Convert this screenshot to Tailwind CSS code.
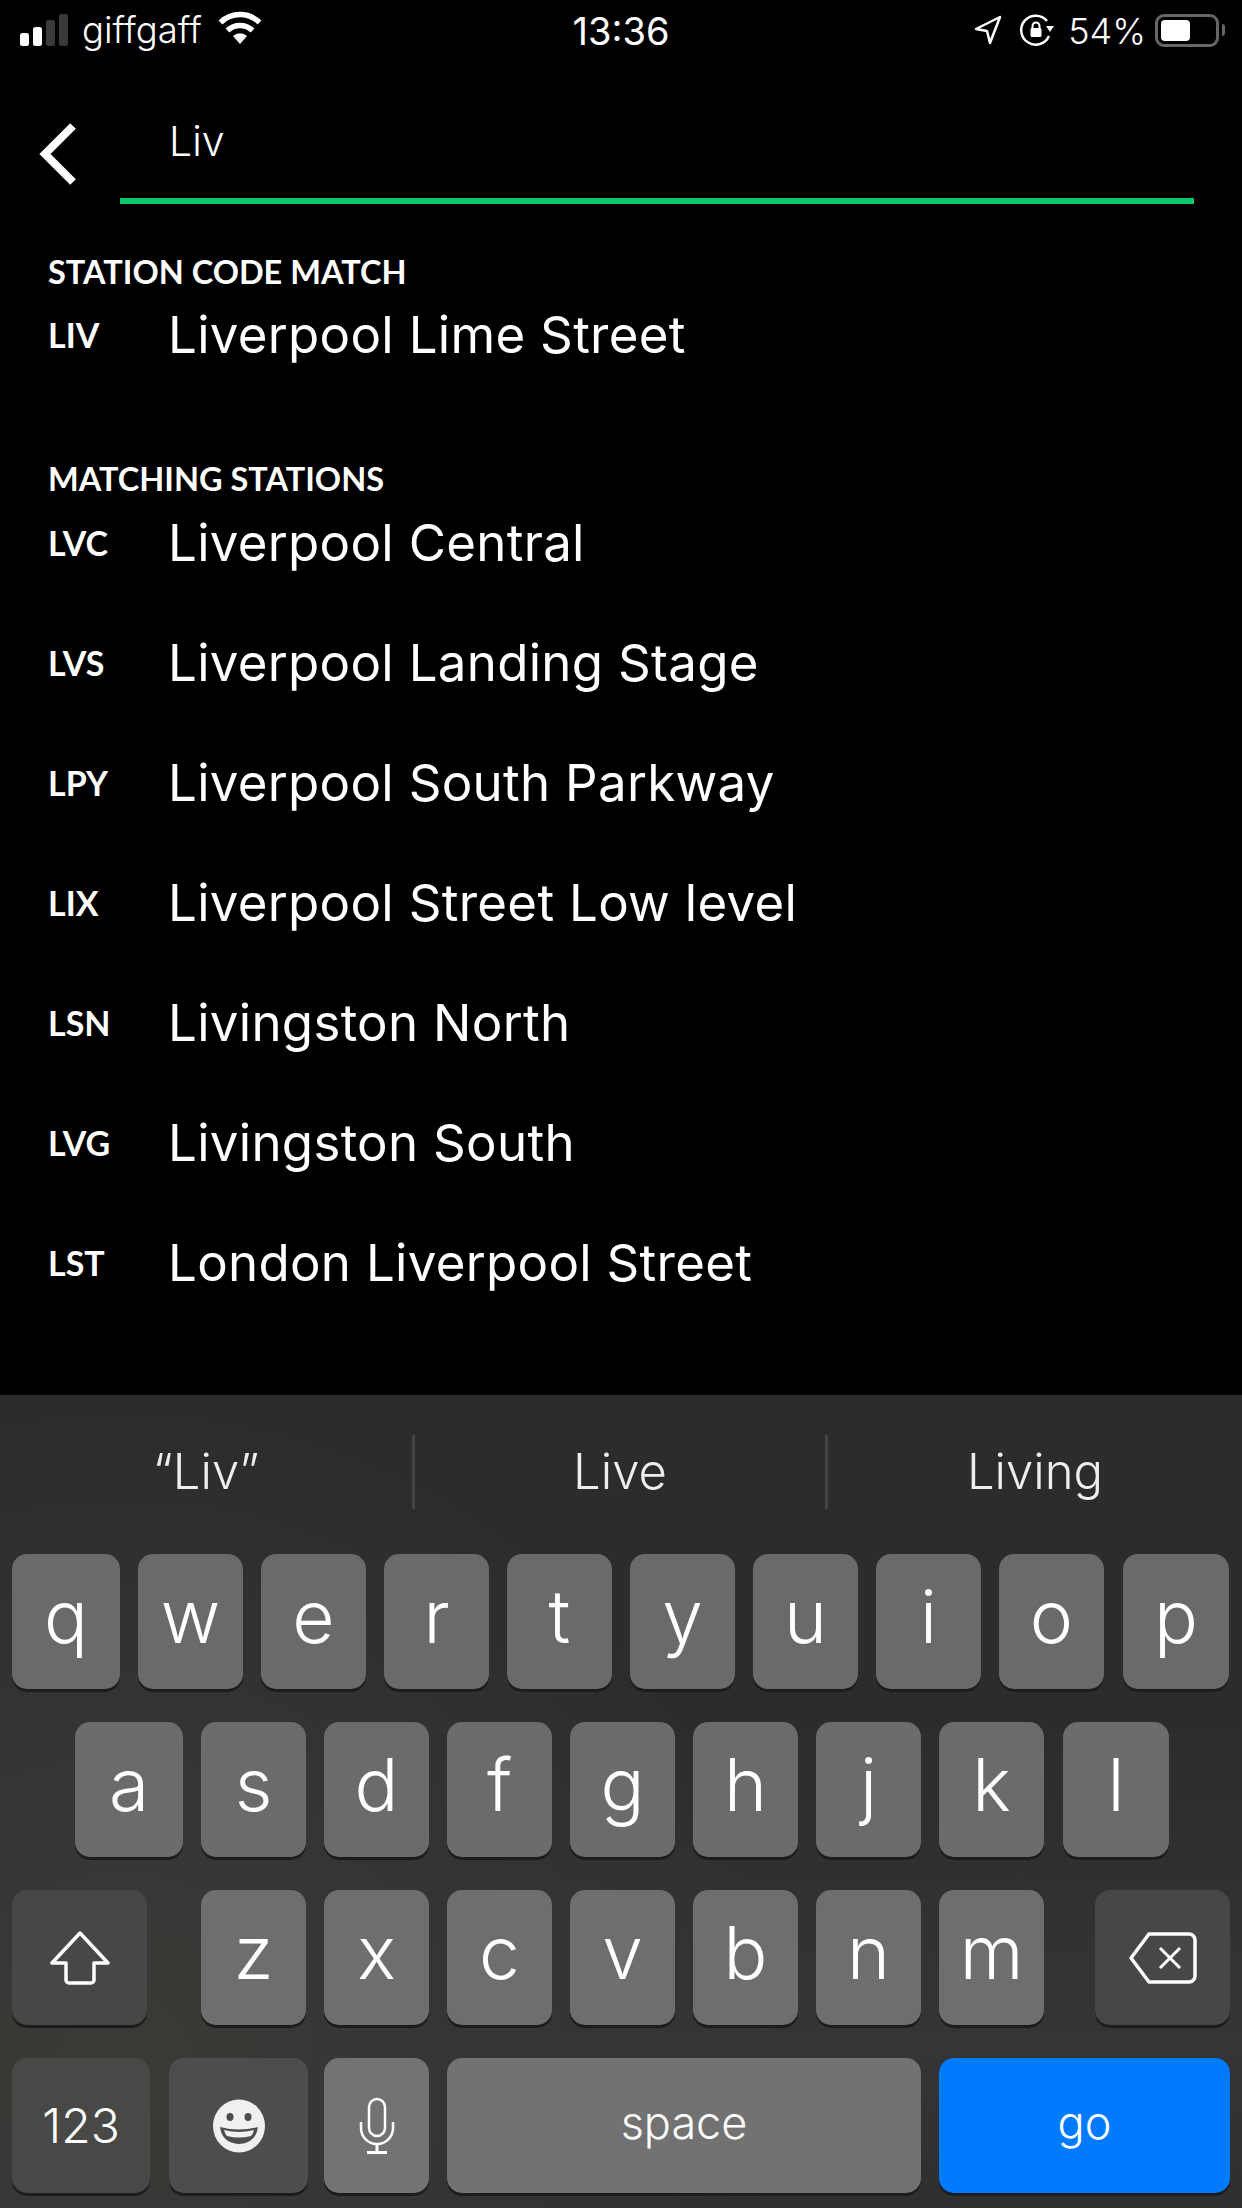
<!DOCTYPE html>
<html><head><meta charset="utf-8"><script src="https://cdn.jsdelivr.net/npm/@tailwindcss/browser@4"></script></head>
<body class="m-0 bg-black">
<div class="w-[1242px] h-[2208px] bg-black text-white flex flex-col overflow-hidden font-['Inter',sans-serif]">
  <!-- status bar -->
  <div class="relative h-[60px] shrink-0 flex items-center pl-[20px] pr-[17px]">
    <div class="flex items-end gap-[4px] h-[33px] mt-[-1px]">
      <div class="w-[9px] h-[13px] rounded-[2.5px] bg-white"></div>
      <div class="w-[9px] h-[19px] rounded-[2.5px] bg-white"></div>
      <div class="w-[9px] h-[26px] rounded-[2.5px] bg-[#3a3a3a]"></div>
      <div class="w-[9px] h-[32px] rounded-[2.5px] bg-[#3a3a3a]"></div>
    </div>
    <span class="ml-[14px] text-[36.5px] leading-[40px] font-light">giffgaff</span>
    <svg class="ml-[15px] mt-[-4px]" width="46" height="34" viewBox="0 0 46 34" fill="none"><path d="M23 33 16 25a10 10 0 0 1 14 0Z" fill="#fff"/><path d="M10.500 19.500a18 18 0 0 1 25 0" stroke="#fff" stroke-width="5.500"/><path d="M3.500 11.500a28 28 0 0 1 39 0" stroke="#fff" stroke-width="5.500"/></svg>
    <span class="absolute left-0 right-0 top-[11px] text-center text-[38px] leading-[40px]">13:36</span>
    <div class="ml-auto flex items-center">
      <svg width="28" height="30" viewBox="0 0 28 30" fill="none"><path d="M26 2 2 14l11 2 3 12Z" stroke="#fff" stroke-width="2.500" stroke-linejoin="round"/></svg>
      <svg class="ml-[18px]" width="34" height="34" viewBox="0 0 34 34" fill="none"><path d="M27 8A14.500 14.500 0 1 0 29 23" stroke="#fff" stroke-width="2.500"/><path d="M26 13h8l-4 6Z" fill="#fff"/><path d="M12.500 16v-3a3.500 3.500 0 0 1 7 0v3" stroke="#fff" stroke-width="2"/><rect x="10.500" y="15" width="11" height="9" rx="1.500" fill="#fff"/></svg>
      <span class="ml-[14px] mt-[2px] text-[36px] leading-[40px] font-light">54%</span>
      <div class="ml-[9px] w-[64px] h-[33px] rounded-[9px] border-[3px] border-[#666] p-[3px]"><div class="w-[29px] h-full rounded-[4px] bg-white"></div></div>
      <div class="ml-[3px] w-[3px] h-[12px] rounded-r-[3px] bg-[#666]"></div>
    </div>
  </div>
  <!-- search -->
  <div class="h-[144px] shrink-0 flex">
    <div class="w-[120px] shrink-0 pl-[38px] pt-[63px]">
      <svg width="40" height="62" viewBox="0 0 40 62" fill="none"><path d="M35 3 7 31l28 28" stroke="#fff" stroke-width="8"/></svg>
    </div>
    <div class="w-[1074px] h-[144px] border-b-[6px] border-[#0cc76a] pl-[49px] pt-[56px]">
      <span class="block text-[41px] leading-[50px] font-light">Liv</span>
    </div>
  </div>
  <!-- list -->
  <div class="flex-1 pl-[48px] flex flex-col">
    <div class="mt-[48px] h-[40px] text-[32.500px] leading-[40px] font-bold font-['Lato',sans-serif]">STATION CODE MATCH</div>
    <div class="flex items-center h-[60px] mt-[13px]"><span class="w-[120px] text-[34px] font-bold font-['Lato',sans-serif] mt-[-2px]">LIV</span><span class="text-[51px] leading-[60px] tracking-[0.3px]">Liverpool Lime Street</span></div>
    <div class="mt-[94px] h-[40px] text-[32.500px] leading-[40px] font-bold font-['Lato',sans-serif]">MATCHING STATIONS</div>
    <div class="flex flex-col gap-[60px] mt-[14px]">
      <div class="flex items-center h-[60px]"><span class="w-[120px] text-[34px] font-bold font-['Lato',sans-serif] mt-[-2px]">LVC</span><span class="text-[51px] leading-[60px] tracking-[0.3px]">Liverpool Central</span></div>
      <div class="flex items-center h-[60px]"><span class="w-[120px] text-[34px] font-bold font-['Lato',sans-serif] mt-[-2px]">LVS</span><span class="text-[51px] leading-[60px] tracking-[0.3px]">Liverpool Landing Stage</span></div>
      <div class="flex items-center h-[60px]"><span class="w-[120px] text-[34px] font-bold font-['Lato',sans-serif] mt-[-2px]">LPY</span><span class="text-[51px] leading-[60px] tracking-[0.3px]">Liverpool South Parkway</span></div>
      <div class="flex items-center h-[60px]"><span class="w-[120px] text-[34px] font-bold font-['Lato',sans-serif] mt-[-2px]">LIX</span><span class="text-[51px] leading-[60px] tracking-[0.3px]">Liverpool Street Low level</span></div>
      <div class="flex items-center h-[60px]"><span class="w-[120px] text-[34px] font-bold font-['Lato',sans-serif] mt-[-2px]">LSN</span><span class="text-[51px] leading-[60px] tracking-[0.3px]">Livingston North</span></div>
      <div class="flex items-center h-[60px]"><span class="w-[120px] text-[34px] font-bold font-['Lato',sans-serif] mt-[-2px]">LVG</span><span class="text-[51px] leading-[60px] tracking-[0.3px]">Livingston South</span></div>
      <div class="flex items-center h-[60px]"><span class="w-[120px] text-[34px] font-bold font-['Lato',sans-serif] mt-[-2px]">LST</span><span class="text-[51px] leading-[60px] tracking-[0.3px]">London Liverpool Street</span></div>
    </div>
  </div>
  <!-- keyboard -->
  <div class="h-[813px] shrink-0 bg-[radial-gradient(circle_at_10%_82%,#3b3a36_0%,#353535_22%,transparent_50%),linear-gradient(180deg,#2c2c2c_0%,#2c2c2c_40%,#353535_80%,#2f2f2f_100%)]">
    <div class="h-[159px] pb-[5px] flex items-center text-[49px] font-light text-[#eee]">
      <div class="w-[412px] text-center">“Liv”</div>
      <div class="w-[3px] h-[74px] bg-[#444]"></div>
      <div class="w-[410px] text-center">Live</div>
      <div class="w-[3px] h-[74px] bg-[#444]"></div>
      <div class="flex-1 text-center">Living</div>
    </div>
    <div class="flex flex-col gap-[33px] text-[73px] font-light">
      <div class="flex gap-[18px] pl-[12px]">
        <div class="w-[108px] h-[135px] flex items-center justify-center rounded-[15px] bg-[#6a6a6a] shadow-[0_3px_0_#1c1c1c] pb-[10px]">q</div>
        <div class="w-[105px] h-[135px] flex items-center justify-center rounded-[15px] bg-[#6a6a6a] shadow-[0_3px_0_#1c1c1c] pb-[10px]">w</div>
        <div class="w-[105px] h-[135px] flex items-center justify-center rounded-[15px] bg-[#6a6a6a] shadow-[0_3px_0_#1c1c1c] pb-[10px]">e</div>
        <div class="w-[105px] h-[135px] flex items-center justify-center rounded-[15px] bg-[#6a6a6a] shadow-[0_3px_0_#1c1c1c] pb-[10px]">r</div>
        <div class="w-[105px] h-[135px] flex items-center justify-center rounded-[15px] bg-[#6a6a6a] shadow-[0_3px_0_#1c1c1c] pb-[10px]">t</div>
        <div class="w-[105px] h-[135px] flex items-center justify-center rounded-[15px] bg-[#6a6a6a] shadow-[0_3px_0_#1c1c1c] pb-[10px]">y</div>
        <div class="w-[105px] h-[135px] flex items-center justify-center rounded-[15px] bg-[#6a6a6a] shadow-[0_3px_0_#1c1c1c] pb-[10px]">u</div>
        <div class="w-[105px] h-[135px] flex items-center justify-center rounded-[15px] bg-[#6a6a6a] shadow-[0_3px_0_#1c1c1c] pb-[10px]">i</div>
        <div class="w-[105px] h-[135px] flex items-center justify-center rounded-[15px] bg-[#6a6a6a] shadow-[0_3px_0_#1c1c1c] pb-[10px]">o</div>
        <div class="w-[106px] h-[135px] ml-[1px] flex items-center justify-center rounded-[15px] bg-[#6a6a6a] shadow-[0_3px_0_#1c1c1c] pb-[10px]">p</div>
      </div>
      <div class="flex gap-[18px] pl-[75px]">
        <div class="w-[108px] h-[135px] flex items-center justify-center rounded-[15px] bg-[#6b6b6b] shadow-[0_3px_0_#1c1c1c] pb-[10px]">a</div>
        <div class="w-[105px] h-[135px] flex items-center justify-center rounded-[15px] bg-[#6b6b6b] shadow-[0_3px_0_#1c1c1c] pb-[10px]">s</div>
        <div class="w-[105px] h-[135px] flex items-center justify-center rounded-[15px] bg-[#6b6b6b] shadow-[0_3px_0_#1c1c1c] pb-[10px]">d</div>
        <div class="w-[105px] h-[135px] flex items-center justify-center rounded-[15px] bg-[#6b6b6b] shadow-[0_3px_0_#1c1c1c] pb-[10px]">f</div>
        <div class="w-[105px] h-[135px] flex items-center justify-center rounded-[15px] bg-[#6b6b6b] shadow-[0_3px_0_#1c1c1c] pb-[10px]">g</div>
        <div class="w-[105px] h-[135px] flex items-center justify-center rounded-[15px] bg-[#6b6b6b] shadow-[0_3px_0_#1c1c1c] pb-[10px]">h</div>
        <div class="w-[105px] h-[135px] flex items-center justify-center rounded-[15px] bg-[#6b6b6b] shadow-[0_3px_0_#1c1c1c] pb-[10px]">j</div>
        <div class="w-[105px] h-[135px] flex items-center justify-center rounded-[15px] bg-[#6b6b6b] shadow-[0_3px_0_#1c1c1c] pb-[10px]">k</div>
        <div class="w-[106px] h-[135px] ml-[1px] flex items-center justify-center rounded-[15px] bg-[#6b6b6b] shadow-[0_3px_0_#1c1c1c] pb-[10px]">l</div>
      </div>
      <div class="flex gap-[18px] pl-[12px]">
        <div class="w-[135px] h-[135px] mr-[36px] flex items-center justify-center rounded-[15px] bg-[#474747] shadow-[0_3px_0_#1c1c1c]">
          <svg width="60" height="54" viewBox="0 0 60 54" fill="none"><path d="M30 2 2 32h14v17a3 3 0 0 0 3 3h22a3 3 0 0 0 3-3V32h14Z" stroke="#fff" stroke-width="3.500" stroke-linejoin="round"/></svg>
        </div>
        <div class="w-[105px] h-[135px] flex items-center justify-center rounded-[15px] bg-[#6e6e6e] shadow-[0_3px_0_#1c1c1c] pb-[10px]">z</div>
        <div class="w-[105px] h-[135px] flex items-center justify-center rounded-[15px] bg-[#6e6e6e] shadow-[0_3px_0_#1c1c1c] pb-[10px]">x</div>
        <div class="w-[105px] h-[135px] flex items-center justify-center rounded-[15px] bg-[#6e6e6e] shadow-[0_3px_0_#1c1c1c] pb-[10px]">c</div>
        <div class="w-[105px] h-[135px] flex items-center justify-center rounded-[15px] bg-[#6e6e6e] shadow-[0_3px_0_#1c1c1c] pb-[10px]">v</div>
        <div class="w-[105px] h-[135px] flex items-center justify-center rounded-[15px] bg-[#6e6e6e] shadow-[0_3px_0_#1c1c1c] pb-[10px]">b</div>
        <div class="w-[105px] h-[135px] flex items-center justify-center rounded-[15px] bg-[#6e6e6e] shadow-[0_3px_0_#1c1c1c] pb-[10px]">n</div>
        <div class="w-[105px] h-[135px] flex items-center justify-center rounded-[15px] bg-[#6e6e6e] shadow-[0_3px_0_#1c1c1c] pb-[10px]">m</div>
        <div class="w-[135px] h-[135px] ml-[33px] flex items-center justify-center rounded-[15px] bg-[#474747] shadow-[0_3px_0_#1c1c1c]">
          <svg width="68" height="52" viewBox="0 0 68 52" fill="none"><path d="M20 2h40a6 6 0 0 1 6 6v36a6 6 0 0 1-6 6H20L2 26Z" stroke="#fff" stroke-width="3.500" stroke-linejoin="round"/><path d="M31 16l20 20M51 16 31 36" stroke="#fff" stroke-width="3"/></svg>
        </div>
      </div>
      <div class="flex pl-[12px] text-[45px]">
        <div class="w-[138px] h-[135px] flex items-center justify-center rounded-[15px] bg-[#484846] shadow-[0_3px_0_#1c1c1c] text-[48px]">123</div>
        <div class="w-[139px] h-[135px] ml-[19px] flex items-center justify-center rounded-[15px] bg-[#4d4d4d] shadow-[0_3px_0_#1c1c1c]">
          <svg width="54" height="54" viewBox="0 0 54 54"><ellipse cx="27" cy="27" rx="26" ry="26.500" fill="#f0f0f0"/><ellipse cx="18" cy="18" rx="3.500" ry="4" fill="#4d4d4d"/><ellipse cx="36" cy="18" rx="3.500" ry="4" fill="#4d4d4d"/><path d="M8 28q19 5 38 0q-2 16-19 17q-17-1-19-17Z" fill="#4d4d4d"/><path d="M12 31q15 4 30 0q-1 4-3 6q-12 3-24 0q-2-2-3-6Z" fill="#f0f0f0"/></svg>
        </div>
        <div class="w-[105px] h-[135px] ml-[16px] flex items-center justify-center rounded-[15px] bg-[#737373] shadow-[0_3px_0_#1c1c1c]">
          <svg width="36" height="58" viewBox="0 0 36 58" fill="none"><rect x="10" y="2" width="16" height="37" rx="8" stroke="#fff" stroke-width="2.500"/><path d="M2 25v6a16 16 0 0 0 32 0v-6" stroke="#fff" stroke-width="2.500"/><path d="M18 47v8M8 55.500h20" stroke="#fff" stroke-width="3"/></svg>
        </div>
        <div class="w-[474px] h-[135px] ml-[18px] pb-[6px] flex items-center justify-center rounded-[15px] bg-[#727272] shadow-[0_3px_0_#1c1c1c]">space</div>
        <div class="w-[291px] h-[135px] ml-[18px] pb-[6px] flex items-center justify-center rounded-[15px] bg-[#007aff] shadow-[0_3px_0_#1c1c1c]">go</div>
      </div>
    </div>
  </div>
</div>
</body></html>
